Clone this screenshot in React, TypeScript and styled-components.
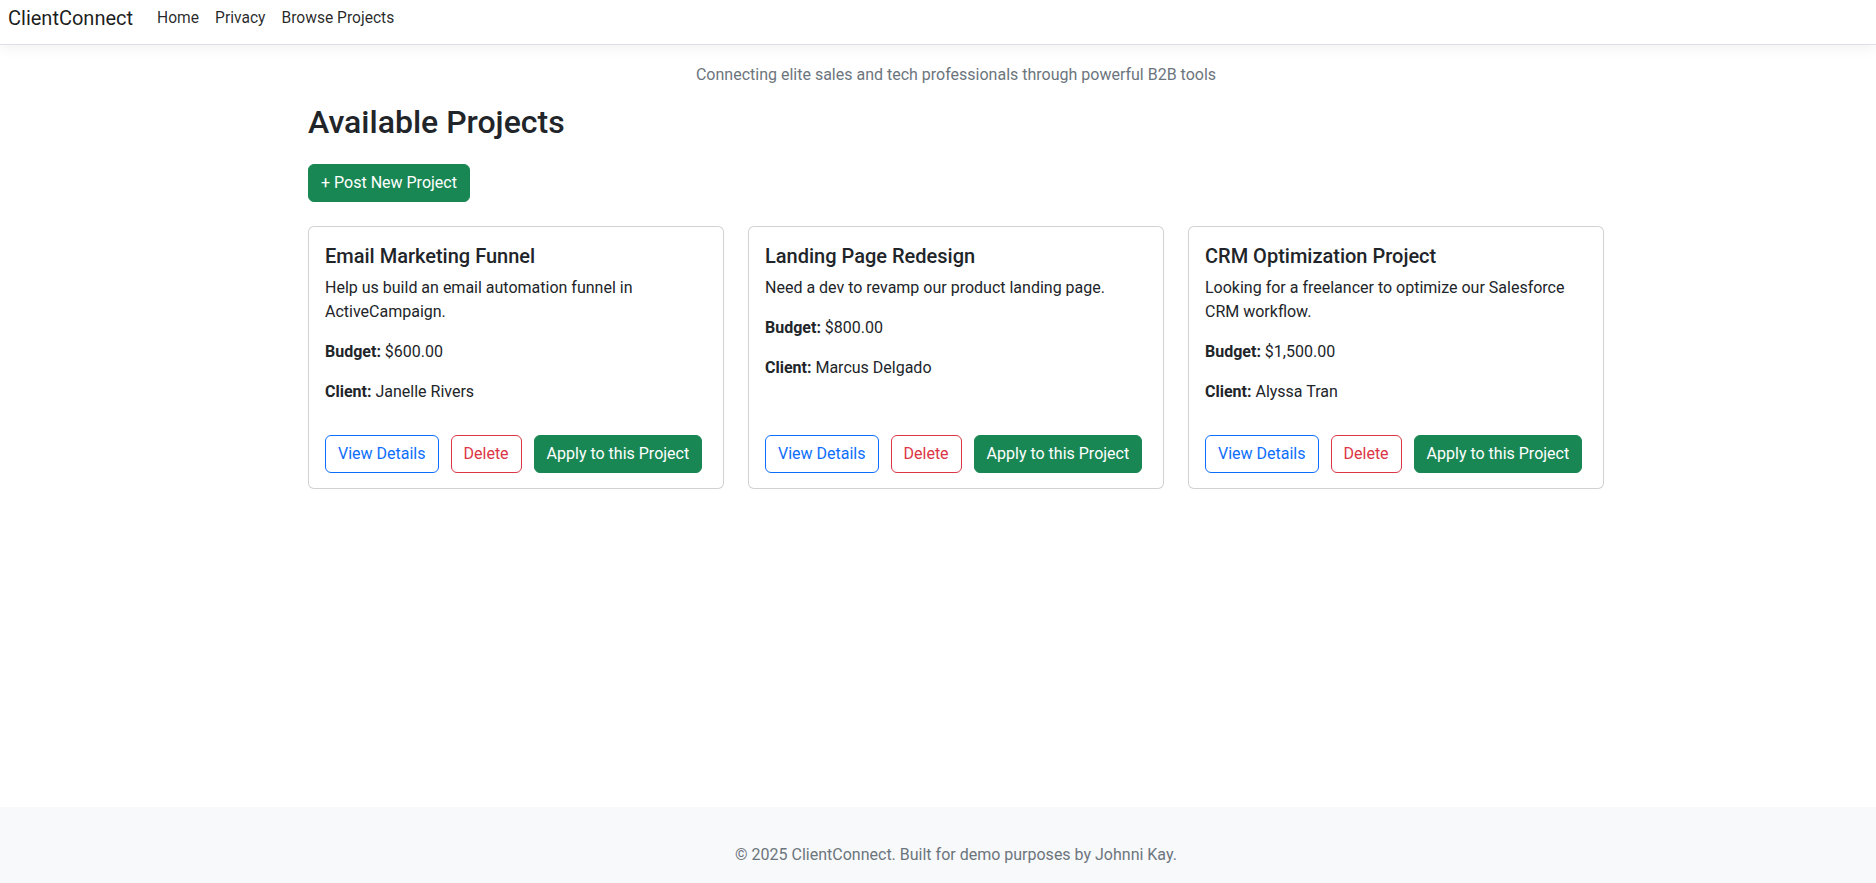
import React from "react";
import styled, { createGlobalStyle } from "styled-components";

interface Project {
  title: string;
  description: string;
  budget: string;
  client: string;
}

const projects: Project[] = [
  {
    title: "Email Marketing Funnel",
    description: "Help us build an email automation funnel in ActiveCampaign.",
    budget: "$600.00",
    client: "Janelle Rivers",
  },
  {
    title: "Landing Page Redesign",
    description: "Need a dev to revamp our product landing page.",
    budget: "$800.00",
    client: "Marcus Delgado",
  },
  {
    title: "CRM Optimization Project",
    description: "Looking for a freelancer to optimize our Salesforce CRM workflow.",
    budget: "$1,500.00",
    client: "Alyssa Tran",
  },
];

const App: React.FC = () => {
  return (
    <Page>
      <GlobalStyle />
      <NavBar>
        <Brand href="#">ClientConnect</Brand>
        <NavLinks>
          <NavLink href="#">Home</NavLink>
          <NavLink href="#">Privacy</NavLink>
          <NavLink href="#">Browse Projects</NavLink>
        </NavLinks>
      </NavBar>
      <Main>
        <Container>
          <Tagline>Connecting elite sales and tech professionals through powerful B2B tools</Tagline>
          <Heading>Available Projects</Heading>
          <Button variant="success" type="button">+ Post New Project</Button>
          <CardGrid>
            {projects.map((p) => (
              <Card key={p.title}>
                <CardTitle>{p.title}</CardTitle>
                <CardText>{p.description}</CardText>
                <CardText><strong>Budget:</strong> {p.budget}</CardText>
                <CardText><strong>Client:</strong> {p.client}</CardText>
                <Actions>
                  <Button variant="outline-primary" type="button">View Details</Button>
                  <Button variant="outline-danger" type="button">Delete</Button>
                  <Button variant="success" type="button">Apply to this Project</Button>
                </Actions>
              </Card>
            ))}
          </CardGrid>
        </Container>
      </Main>
      <Footer>© 2025 ClientConnect. Built for demo purposes by Johnni Kay.</Footer>
    </Page>
  );
};

export default App;

const GlobalStyle = createGlobalStyle`
  * {
    box-sizing: border-box;
  }
  body {
    margin: 0;
    font-family: "Segoe UI", Roboto, "Noto Sans", "Liberation Sans", sans-serif;
    font-size: 16px;
    line-height: 1.5;
    color: #212529;
    background: #fff;
  }
`;

const Page = styled.div`
  min-height: 100vh;
  display: flex;
  flex-direction: column;
`;

const NavBar = styled.header`
  height: 45px;
  display: flex;
  align-items: center;
  padding: 0 8px 8px;
  background-color: #fff;
  border-bottom: 1px solid #dee2e6;
  box-shadow: 0 4px 12px rgba(0, 0, 0, 0.05);
`;

const Brand = styled.a`
  font-size: 20px;
  line-height: 30px;
  color: rgba(0, 0, 0, 0.9);
  text-decoration: none;
  margin-right: 16px;
`;

const NavLinks = styled.nav`
  display: flex;
`;

const NavLink = styled.a`
  padding: 0 8px;
  color: rgba(0, 0, 0, 0.85);
  text-decoration: none;
  font-size: 15.6px;
  line-height: 24px;
`;

const Main = styled.main`
  flex: 1;
  padding: 18px 0 0 36px;
`;

const Tagline = styled.p`
  margin: 0 0 16px;
  text-align: center;
  color: #6c757d;
`;

const Container = styled.div`
  width: 1296px;
  margin: 0 auto;
`;

const Heading = styled.h2`
  margin: 0 0 23px;
  font-size: 32px;
  font-weight: 500;
  line-height: 1.2;
`;

const Button = styled.button<{ variant: "success" | "outline-primary" | "outline-danger" }>`
  display: inline-block;
  padding: 6px 12px;
  font-family: inherit;
  font-size: 16px;
  line-height: 24px;
  border-radius: 6px;
  border: 1px solid;
  cursor: pointer;
  white-space: nowrap;
  color: ${(p) =>
    p.variant === "success" ? "#fff" : p.variant === "outline-primary" ? "#0d6efd" : "#dc3545"};
  background-color: ${(p) => (p.variant === "success" ? "#198754" : "transparent")};
  border-color: ${(p) =>
    p.variant === "success" ? "#198754" : p.variant === "outline-primary" ? "#0d6efd" : "#dc3545"};
`;

const CardGrid = styled.div`
  display: grid;
  grid-template-columns: repeat(3, 1fr);
  gap: 24px;
  margin-top: 24px;
`;

const Card = styled.div`
  display: flex;
  flex-direction: column;
  padding: 17px 16px 15px;
  border: 1px solid rgba(0, 0, 0, 0.175);
  border-radius: 6px;
  background: #fff;
`;

const CardTitle = styled.h5`
  margin: 0 0 8px;
  font-size: 20px;
  font-weight: 500;
  line-height: 1.2;
`;

const CardText = styled.p`
  margin: 0 0 16px;

  strong {
    font-weight: 700;
  }
`;

const Actions = styled.div`
  display: flex;
  gap: 12px;
  margin-top: auto;
  padding-top: 15px;
`;

const Footer = styled.footer`
  padding: 36px 0 16px 36px;
  background-color: #f8f9fa;
  color: #6c757d;
  text-align: center;
  line-height: 24px;
`;
